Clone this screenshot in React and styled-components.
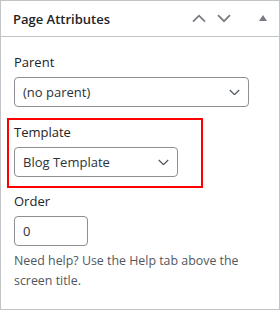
import React from "react";
import styled, { createGlobalStyle } from "styled-components";

const GlobalStyle = createGlobalStyle`
  body {
    margin: 0;
    background: #ffffff;
    font-family: "Open Sans", "Noto Sans", sans-serif;
  }
`;

const Chevron = ({ dir = "down", size = 14, stroke = 2 }) => (
  <svg width={size} height={size * 0.6} viewBox="0 0 14 8" fill="none">
    <path
      d={dir === "up" ? "M1 7.5 L7 1.5 L13 7.5" : "M1 1 L7 7 L13 1"}
      stroke="currentColor"
      strokeWidth={stroke}
    />
  </svg>
);

const PageAttributes = () => {
  return (
    <>
      <GlobalStyle />
      <Panel>
        <Header>
          <Title>Page Attributes</Title>
          <Handles>
            <HandleButton>
              <Chevron dir="up" stroke={1.8} />
            </HandleButton>
            <HandleButton>
              <Chevron dir="down" stroke={1.8} />
            </HandleButton>
            <Toggle>
              <svg width="8" height="6" viewBox="0 0 8 6">
                <path d="M0 6 L4 0 L8 6 Z" fill="currentColor" />
              </svg>
            </Toggle>
          </Handles>
        </Header>
        <Inside>
          <Label>Parent</Label>
          <Select width="235px">
            <span>(no parent)</span>
            <SelectArrow>
              <Chevron size={11} stroke={1.6} />
            </SelectArrow>
          </Select>
          <Highlight>
            <Label>Template</Label>
            <Select width="164px">
              <span>Blog Template</span>
              <SelectArrow>
                <Chevron size={11} stroke={1.6} />
              </SelectArrow>
            </Select>
          </Highlight>
          <Label>Order</Label>
          <NumberInput>0</NumberInput>
          <Help>Need help? Use the Help tab above the screen title.</Help>
        </Inside>
      </Panel>
    </>
  );
};

const Panel = styled.div`
  width: 280px;
  height: 310px;
  box-sizing: border-box;
  border: 1px solid #c3c4c7;
  background: #fff;
  color: #1d2327;
`;

const Header = styled.div`
  display: flex;
  align-items: center;
  justify-content: space-between;
  height: 35px;
  border-bottom: 1px solid #c3c4c7;
  padding: 0 0 0 12px;
`;

const Title = styled.h2`
  margin: 0;
  font-size: 13px;
  font-weight: 600;
  color: #1d2327;
`;

const Handles = styled.div`
  display: flex;
  align-items: center;
  padding-right: 12px;
`;

const HandleButton = styled.span`
  display: flex;
  align-items: center;
  justify-content: center;
  width: 25px;
  color: #787c82;
`;

const Toggle = styled.span`
  display: flex;
  justify-content: flex-end;
  width: 31px;
  color: #787c82;
`;

const Inside = styled.div`
  padding: 15px 12px 0 13px;
`;

const Label = styled.div`
  font-size: 13px;
  line-height: 20px;
  color: #1d2327;
  margin-bottom: 5px;
`;

const Select = styled.div`
  display: flex;
  align-items: center;
  justify-content: space-between;
  width: ${(p) => p.width};
  height: 30px;
  box-sizing: border-box;
  border: 1px solid #8c8f94;
  border-radius: 4px;
  padding: 0 8px 0 8px;
  font-size: 13px;
  color: #2c3338;
`;

const SelectArrow = styled.span`
  display: flex;
  color: #50575e;
`;

const Highlight = styled.div`
  border: 2px solid #ff0000;
  margin: 11px 0 3px -7px;
  padding: 2px 0 9px 5px;
  width: 196px;
  box-sizing: border-box;
`;

const NumberInput = styled.div`
  display: flex;
  align-items: center;
  width: 74px;
  height: 30px;
  box-sizing: border-box;
  border: 1px solid #8c8f94;
  border-radius: 4px;
  padding-left: 8px;
  font-size: 13px;
  color: #2c3338;
`;

const Help = styled.p`
  margin: 5px 0 0;
  font-size: 12.4px;
  line-height: 20px;
  color: #50575e;
`;

export default PageAttributes;
